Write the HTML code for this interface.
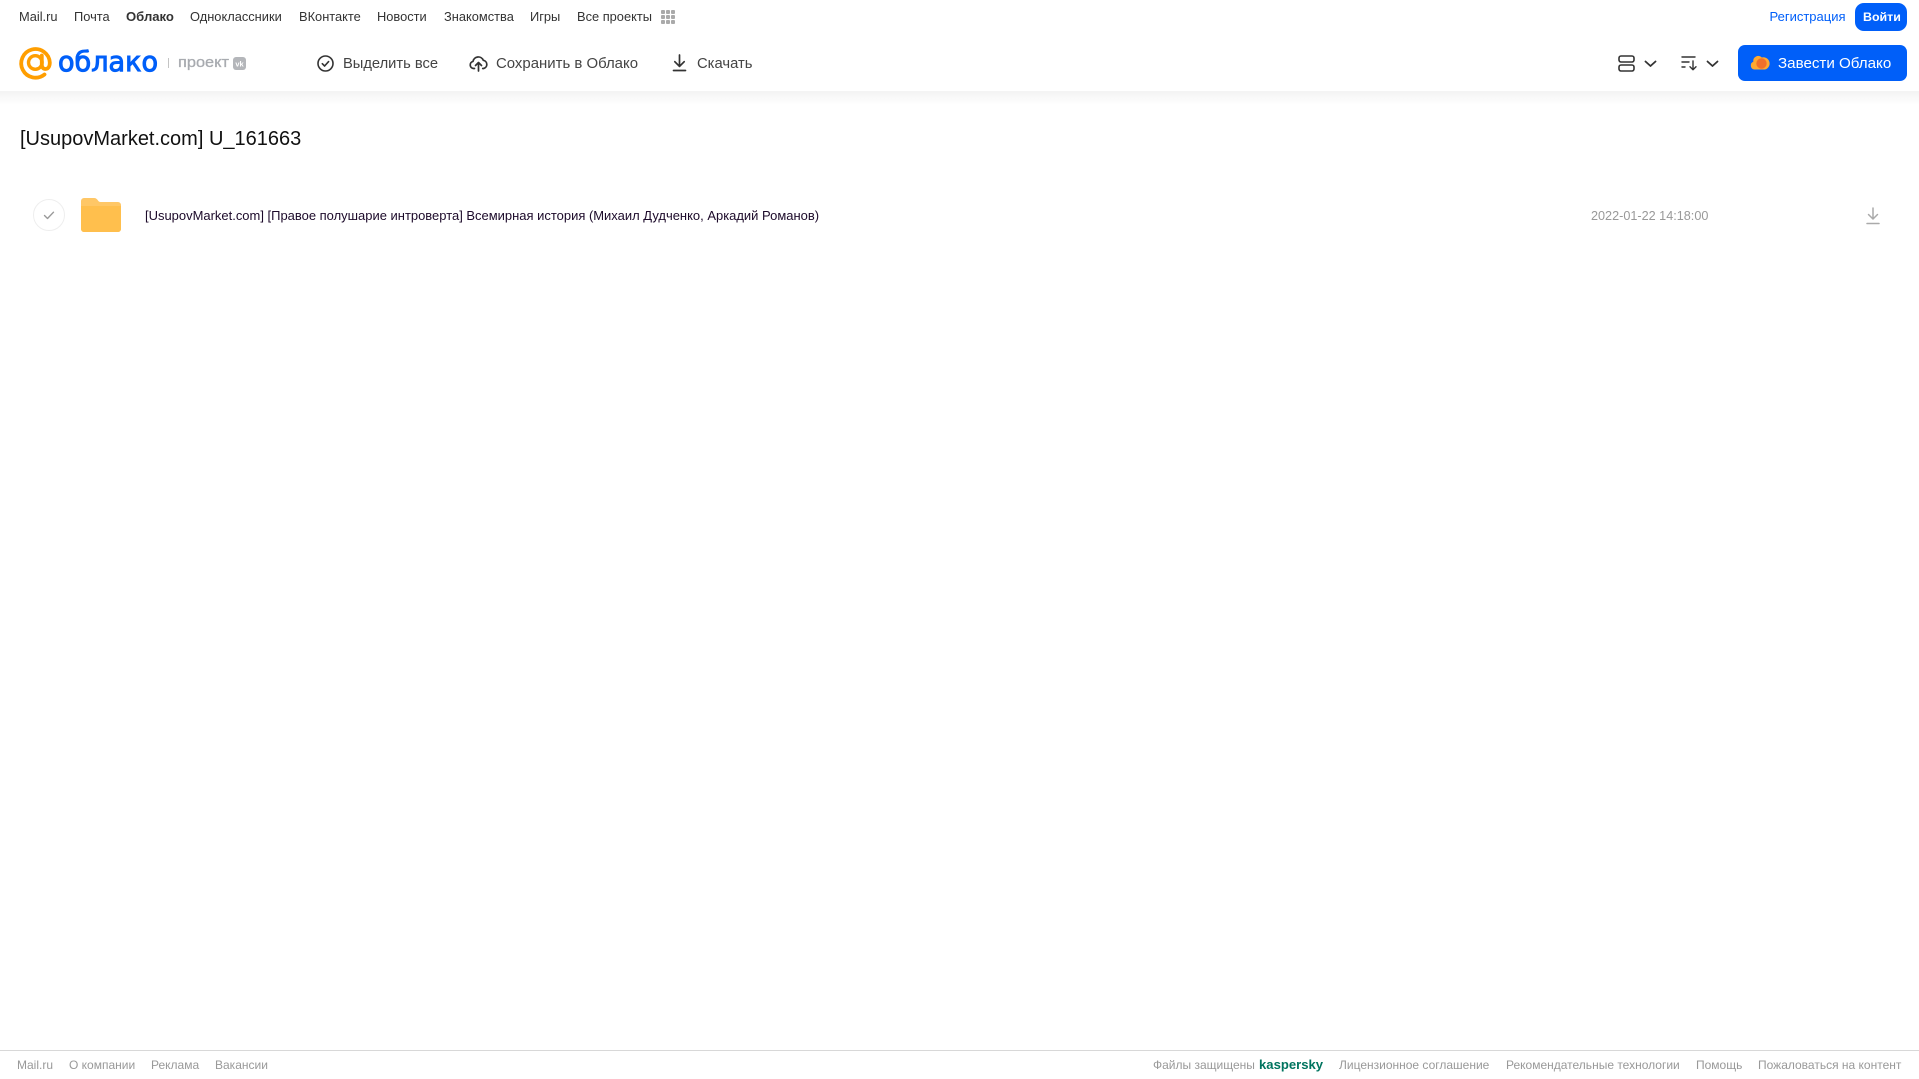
<!DOCTYPE html>
<html lang="ru">
<head>
<meta charset="utf-8">
<title>Облако</title>
<style>
html,body{margin:0;padding:0;background:#fff}
body{position:relative;width:1919px;height:1079px;overflow:hidden;font-family:"Liberation Sans",Arial,sans-serif}
.t{position:absolute;white-space:nowrap;line-height:20px}
.n{top:7px;font-size:12.85px;color:#333}
.b{top:53.5px;font-size:14.7px;color:#444}
.f{top:1055px;font-size:12px;color:#999}
svg{position:absolute;overflow:visible}
#shadow{position:absolute;left:0;top:91px;width:1919px;height:14px;background:linear-gradient(#f3f3f3,#fff)}
.btn{position:absolute;background:#005ff9}
#foot{position:absolute;left:0;top:1050px;width:1919px;height:1px;background:#d8d8d8}
</style>
</head>
<body>
<span class="t n" style="left:19px">Mail.ru</span>
<span class="t n" style="left:74px">Почта</span>
<span class="t n" style="left:126px;font-weight:bold;font-size:13.1px">Облако</span>
<span class="t n" style="left:190px">Одноклассники</span>
<span class="t n" style="left:299px">ВКонтакте</span>
<span class="t n" style="left:377px">Новости</span>
<span class="t n" style="left:444px">Знакомства</span>
<span class="t n" style="left:530px">Игры</span>
<span class="t n" style="left:577px">Все проекты</span>
<svg style="left:661px;top:10px" width="14" height="14" fill="#aaa"><rect width="4" height="4" rx="1"/><rect x="5" width="4" height="4" rx="1"/><rect x="10" width="4" height="4" rx="1"/><rect y="5" width="4" height="4" rx="1"/><rect x="5" y="5" width="4" height="4" rx="1"/><rect x="10" y="5" width="4" height="4" rx="1"/><rect y="10" width="4" height="4" rx="1"/><rect x="5" y="10" width="4" height="4" rx="1"/><rect x="10" y="10" width="4" height="4" rx="1"/></svg>
<span class="t n" style="left:1769.5px;color:#005ff9;font-size:13px">Регистрация</span>
<div class="btn" style="left:1855px;top:3px;width:52px;height:28px;border-radius:9px"></div>
<span class="t n" style="left:1863px;color:#fff;font-weight:bold;font-size:12.4px">Войти</span>

<svg style="left:0;top:0" width="230" height="91">
<path d="M44.5 74.5A14.3 14.3 0 1 1 49.8 62.5c0 4-1.7 6.5-4.3 6.5s-3.700-2.200-3.700-4.500V55.500" fill="none" stroke="#ff9e00" stroke-width="3.8" stroke-linecap="round"/>
<circle cx="35.3" cy="62.5" r="6.8" fill="none" stroke="#ff9e00" stroke-width="3.4"/>
<text x="58" y="71" font-family="DejaVu Sans,sans-serif" font-size="28" fill="#005ff9" stroke="#005ff9" stroke-width="1" textLength="100" lengthAdjust="spacingAndGlyphs">облако</text>
<rect x="168" y="58" width="1" height="10" fill="#c4c4c4"/>
<text x="178" y="67" font-family="Liberation Sans,sans-serif" font-size="14.8" fill="#a8abb0" stroke="#a8abb0" stroke-width=".3" textLength="51" lengthAdjust="spacingAndGlyphs">проект</text>
<rect x="233" y="57" width="13" height="13" rx="3" fill="#b4b6ba"/>
<text x="239.5" y="66.5" text-anchor="middle" font-family="Liberation Sans,sans-serif" font-size="7.5" font-weight="bold" fill="#fff">vk</text>
</svg>

<svg style="left:316.5px;top:55px" width="17" height="17" fill="none" stroke="#333" stroke-width="1.6" stroke-linecap="round" stroke-linejoin="round"><circle cx="8.5" cy="8.5" r="7.5"/><path d="M5.3 8.700l2.300 2.300 4-4.400"/></svg>
<span class="t b" style="left:343px">Выделить все</span>
<svg style="left:469px;top:54px" width="19" height="18" fill="none" stroke="#333" stroke-width="1.7" stroke-linecap="round" stroke-linejoin="round"><path d="M5.5 14.5H4.6A3.600 3.600 0 0 1 4 7.400 5.400 5.400 0 0 1 14.300 6.300a4.200 4.200 0 0 1 .4 8.200h-1"/><path d="M9.500 17V9M6.500 11.500l3-3 3 3"/></svg>
<span class="t b" style="left:496px;font-size:14.95px">Сохранить в Облако</span>
<svg style="left:671.5px;top:54px" width="15" height="18" fill="none" stroke="#333" stroke-width="1.7" stroke-linecap="round" stroke-linejoin="round"><path d="M7.500 1v11M2.800 7.700l4.700 4.700 4.700-4.700M1.500 16.500h12"/></svg>
<span class="t b" style="left:697px;font-size:14.8px">Скачать</span>

<svg style="left:1618px;top:55px" width="17" height="17" fill="none" stroke="#333" stroke-width="1.6"><rect x="1" y="1" width="15" height="6" rx="2"/><rect x="1" y="10" width="15" height="6" rx="2"/></svg>
<svg style="left:1643.5px;top:60px" width="13" height="8" fill="none" stroke="#333" stroke-width="1.8" stroke-linecap="round" stroke-linejoin="round"><path d="M1.500 1.500l5 4.500 5-4.500"/></svg>
<svg style="left:1681px;top:55px" width="17" height="16" fill="none" stroke="#333" stroke-width="1.4" stroke-linecap="round" stroke-linejoin="round"><path d="M1 2h13M1 7h7M1 12h3M12 6v8.500M9 11.700l3 3 3-3"/></svg>
<svg style="left:1705.5px;top:60px" width="13" height="8" fill="none" stroke="#333" stroke-width="1.8" stroke-linecap="round" stroke-linejoin="round"><path d="M1.500 1.500l5 4.500 5-4.500"/></svg>
<div class="btn" style="left:1738px;top:45px;width:169px;height:36px;border-radius:7px"></div>
<svg style="left:1750px;top:53px" width="19" height="17"><path d="M4.500 16.500A4 4 0 0 1 3.300 8.800 5 5 0 0 1 11.800 4.500 5.500 5.500 0 0 1 15 16.500z" fill="#ffa930"/><circle cx="11.500" cy="10.500" r="5.200" fill="#f0702a"/></svg>
<span class="t b" style="left:1778px;color:#fff;font-size:15.15px">Завести Облако</span>
<div id="shadow"></div>

<span class="t" style="left:20px;top:125.5px;font-size:20px;line-height:26px;color:#111">[UsupovMarket.com] U_161663</span>
<svg style="left:33px;top:199px" width="32" height="32" fill="none"><circle cx="16" cy="16" r="15.5" stroke="#eee"/><path d="M11.500 16.500l3 3 6-6.300" stroke="#999" stroke-width="1.4" stroke-linecap="round" stroke-linejoin="round"/></svg>
<svg style="left:81px;top:198px" width="40" height="34"><path d="M3 0h10c2 0 3 1 4 2.500 1 1.500 2 1.500 3.500 1.500H37a3 3 0 0 1 3 3v24a3 3 0 0 1-3 3H3a3 3 0 0 1-3-3V3a3 3 0 0 1 3-3z" fill="#ffc766"/><path d="M0 8h40v23a3 3 0 0 1-3 3H3a3 3 0 0 1-3-3z" fill="#ffbf4d"/></svg>
<span class="t" style="left:145px;top:206px;font-size:12.97px;color:#1c0a2a">[UsupovMarket.com] [Правое полушарие интроверта] Всемирная история (Михаил Дудченко, Аркадий Романов)</span>
<span class="t" style="left:1591px;top:206px;font-size:12.65px;color:#999">2022-01-22 14:18:00</span>
<svg style="left:1866px;top:206px" width="14" height="19" fill="none" stroke="#aaa" stroke-width="1.5" stroke-linecap="round" stroke-linejoin="round"><path d="M7 2v11M2.500 8.500L7 13l4.500-4.500M1 17.500h12"/></svg>

<div id="foot"></div>
<span class="t f" style="left:17px">Mail.ru</span>
<span class="t f" style="left:69px">О компании</span>
<span class="t f" style="left:151px">Реклама</span>
<span class="t f" style="left:215px">Вакансии</span>
<span class="t f" style="left:1153px">Файлы защищены</span>
<span class="t f" style="left:1259px;color:#00745f;font-weight:bold;font-size:13.1px">kaspersky</span>
<span class="t f" style="left:1339px">Лицензионное соглашение</span>
<span class="t f" style="left:1506px">Рекомендательные технологии</span>
<span class="t f" style="left:1696px">Помощь</span>
<span class="t f" style="left:1758px">Пожаловаться на контент</span>
</body>
</html>
